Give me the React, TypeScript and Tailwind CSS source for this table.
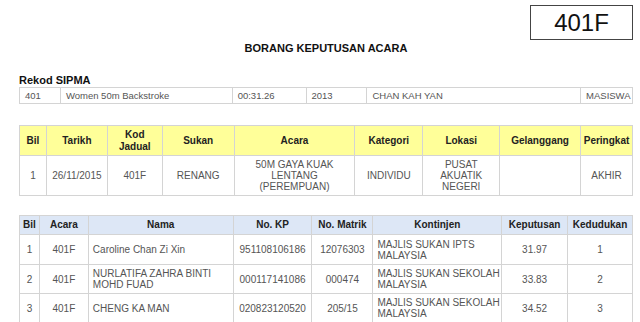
const pct = (w: number) => `${(w / 614) * 100}%`;

export default function App() {
  const rekod = [
    { v: "401", w: 41 },
    { v: "Women 50m Backstroke", w: 172 },
    { v: "00:31.26", w: 74 },
    { v: "2013", w: 61 },
    { v: "CHAN KAH YAN", w: 214 },
    { v: "MASISWA", w: 52 },
  ];

  const acaraCols = [27, 61, 55, 72, 121, 68, 77, 81, 52];
  const acaraHead = ["Bil", "Tarikh", "Kod Jadual", "Sukan", "Acara", "Kategori", "Lokasi", "Gelanggang", "Peringkat"];
  const acaraRow = [
    "1",
    "26/11/2015",
    "401F",
    "RENANG",
    "50M GAYA KUAK LENTANG (PEREMPUAN)",
    "INDIVIDU",
    "PUSAT AKUATIK NEGERI",
    "",
    "AKHIR",
  ];

  const resultCols = [20, 49, 145, 79, 61, 129, 66, 65];
  const resultHead = ["Bil", "Acara", "Nama", "No. KP", "No. Matrik", "Kontinjen", "Keputusan", "Kedudukan"];
  const results = [
    ["1", "401F", "Caroline Chan Zi Xin", "951108106186", "12076303", "MAJLIS SUKAN IPTS MALAYSIA", "31.97", "1"],
    ["2", "401F", "NURLATIFA ZAHRA BINTI MOHD FUAD", "000117141086", "000474", "MAJLIS SUKAN SEKOLAH MALAYSIA", "33.83", "2"],
    ["3", "401F", "CHENG KA MAN", "020823120520", "205/15", "MAJLIS SUKAN SEKOLAH MALAYSIA", "34.52", "3"],
    ["", "", "", "", "", "", "", ""],
  ];
  // Nama and Kontinjen are left aligned, the rest centred
  const leftCols = [2, 5];

  return (
    <div className="w-[640px] h-[322px] overflow-hidden bg-white font-['Liberation_Sans',Arial,sans-serif]">
      <div className="w-[614px] ml-[19px]">
        <div className="flex justify-end pt-[5px]">
          <div className="w-[103px] h-[35px] border border-[#444] flex items-center justify-center text-[24px] text-[#111] leading-none">
            401F
          </div>
        </div>

        <h1 className="mt-[2px] text-center text-[11px] leading-[13px] font-bold text-[#111]">
          BORANG KEPUTUSAN ACARA
        </h1>

        <div className="mt-[19px] text-[11px] leading-[13px] font-bold text-[#111]">Rekod SIPMA</div>
        <table className="table-fixed border-collapse w-[614px] text-[9.5px] text-[#555]">
          <colgroup>
            {rekod.map((c, i) => (
              <col key={i} style={{ width: pct(c.w) }} />
            ))}
          </colgroup>
          <tbody>
            <tr className="h-[16px]">
              {rekod.map((c, i) => (
                <td key={i} className="border border-[#d4d4d4] pl-[5px] pr-0 py-0 leading-[12px] whitespace-nowrap">
                  {c.v}
                </td>
              ))}
            </tr>
          </tbody>
        </table>

        <table className="mt-[21px] table-fixed border-collapse w-[614px] text-[10px]">
          <colgroup>
            {acaraCols.map((w, i) => (
              <col key={i} style={{ width: pct(w) }} />
            ))}
          </colgroup>
          <thead>
            <tr className="h-[30px] bg-[#ffff99]">
              {acaraHead.map((h) => (
                <th key={h} className="border border-[#d4d4d4] px-[2px] font-bold text-[#222] leading-[12px] text-center">
                  {h}
                </th>
              ))}
            </tr>
          </thead>
          <tbody>
            <tr className="h-[40px]">
              {acaraRow.map((v, i) => (
                <td key={i} className="border border-[#d4d4d4] px-[3px] text-center text-[#555] leading-[11px]">
                  {v}
                </td>
              ))}
            </tr>
          </tbody>
        </table>

        <table className="mt-[19px] table-fixed border-collapse w-[614px] text-[10px]">
          <colgroup>
            {resultCols.map((w, i) => (
              <col key={i} style={{ width: pct(w) }} />
            ))}
          </colgroup>
          <thead>
            <tr className="h-[19px] bg-[#dde7f6]">
              {resultHead.map((h) => (
                <th key={h} className="border border-[#d4d4d4] px-[1px] font-bold text-[#222] leading-[12px] text-center whitespace-nowrap">
                  {h}
                </th>
              ))}
            </tr>
          </thead>
          <tbody>
            {results.map((r, ri) => (
              <tr key={ri} className={ri === 0 ? "h-[30px]" : "h-[29px]"}>
                {r.map((v, i) => (
                  <td
                    key={i}
                    className={
                      "border border-[#d4d4d4] text-[#555] leading-[11px] " +
                      (leftCols.includes(i) ? "text-left pl-[4px] pr-0" : "text-center px-[2px]")
                    }
                  >
                    {v}
                  </td>
                ))}
              </tr>
            ))}
          </tbody>
        </table>
      </div>
    </div>
  );
}
